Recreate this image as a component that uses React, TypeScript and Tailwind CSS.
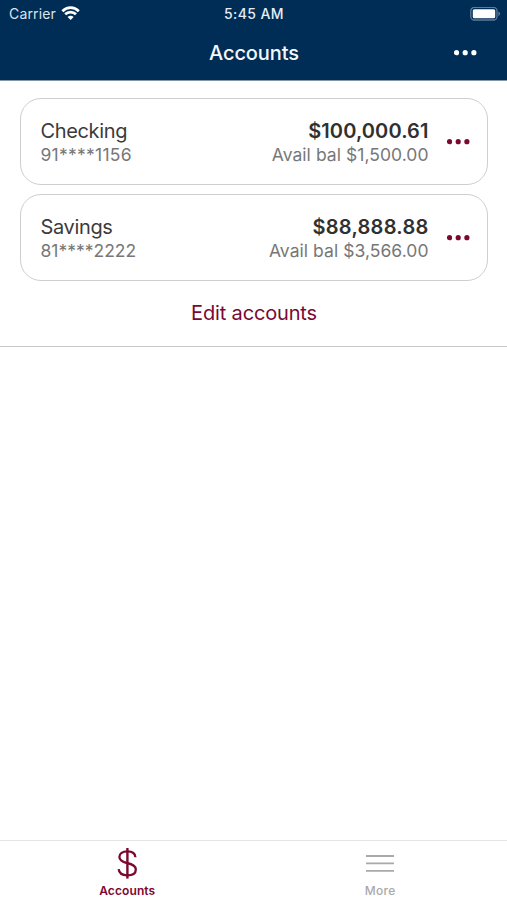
interface Account {
  name: string;
  mask: string;
  balance: string;
  available: string;
  // letter-spacing that differs between the rows
  maskTracking: string;
  balanceTracking: string;
}

const accounts: Account[] = [
  {
    name: "Checking",
    mask: "91****1156",
    balance: "$100,000.61",
    available: "$1,500.00",
    maskTracking: "tracking-[0.25px]",
    balanceTracking: "tracking-[0.1px]",
  },
  {
    name: "Savings",
    mask: "81****2222",
    balance: "$88,888.88",
    available: "$3,566.00",
    maskTracking: "tracking-[0px]",
    balanceTracking: "tracking-[0.25px]",
  },
];

function Dots() {
  return (
    <svg width="23" height="6" viewBox="0 0 23 6" fill="currentColor">
      <circle cx="2.5" cy="2.7" r="2.6" />
      <circle cx="11.2" cy="2.7" r="2.6" />
      <circle cx="19.9" cy="2.7" r="2.6" />
    </svg>
  );
}

function WifiIcon() {
  return (
    <svg width="20" height="15" viewBox="0 0 20 15" fill="none" stroke="white" strokeWidth="2.7">
      <path d="M1.4 5.3C6.1 .5 13.1 .5 17.8 5.3" />
      <path d="M4.2 8.3C7.1 5.4 12.1 5.4 15 8.3" />
      <path d="M9.6 14.1L6.6 11.1C8.3 9.4 10.9 9.4 12.6 11.1Z" fill="white" stroke="none" />
    </svg>
  );
}

function BatteryIcon() {
  return (
    <svg width="31" height="14" viewBox="0 0 31 14" fill="none">
      <rect x=".8" y=".4" width="26.2" height="12.6" rx="3.5" stroke="#5f7b98" strokeWidth="1.3" />
      <rect x="2.8" y="2.2" width="22.4" height="9" rx="1.5" fill="white" />
      <path d="M28.4 4.5C30.7 5.5 30.7 7.9 28.4 8.9Z" fill="#5f7b98" />
    </svg>
  );
}

function StatusBar() {
  return (
    <div className="grid h-[27px] grid-cols-3 items-center pl-[9px] pr-[6px]">
      <div className="flex items-center gap-[5px]">
        <span className="text-[14px] leading-[27px] tracking-[0.15px] text-[#dce4ec]">Carrier</span>
        <WifiIcon />
      </div>
      <span className="mr-[2px] pt-px text-center text-[14px] leading-[26px] font-medium tracking-[0.4px] text-[#e6edf4]">
        5:45 AM
      </span>
      <div className="flex justify-end">
        <BatteryIcon />
      </div>
    </div>
  );
}

function AccountCard({ account }: { account: Account }) {
  return (
    <div className="flex h-[87px] items-center rounded-[21px] border border-[#cfcfcf] bg-white pr-[17px] pl-[19.5px]">
      <div className="flex-1 pt-[2px]">
        <div className="text-[20px] leading-[24px] tracking-[-0.35px] text-[#3b3b3b]">{account.name}</div>
        <div className={`mt-px text-[17.5px] leading-[22px] text-[#777777] ${account.maskTracking}`}>{account.mask}</div>
      </div>
      <div className="pt-[2px] text-right">
        <div className={`text-[20px] leading-[24px] font-semibold text-[#303030] ${account.balanceTracking}`}>
          {account.balance}
        </div>
        <div className="mt-px text-[17.5px] leading-[22px] tracking-[0.05px] text-[#777777]">
          Avail bal {account.available}
        </div>
      </div>
      <button className="ml-[18.5px] text-[#7a0830]">
        <Dots />
      </button>
    </div>
  );
}

export default function App() {
  return (
    <div className="flex h-[900px] w-[507px] flex-col bg-white font-['Inter',sans-serif]">
      <header className="h-[80px] bg-[#002d56] text-[#f4f7fa]">
        <StatusBar />
        <div className="grid h-[52px] grid-cols-[1fr_auto_1fr] items-center">
          <h1 className="col-start-2 pl-px text-[20px] leading-[52px] font-[450] tracking-[-0.1px]">Accounts</h1>
          <button className="mr-[30px] justify-self-end text-white">
            <Dots />
          </button>
        </div>
      </header>

      <main className="flex-1 border-t border-[#8294a6]">
        <section className="flex h-[266px] flex-col gap-[9px] border-b border-[#c7c7c7] pt-[17px] pr-[19px] pl-[20px]">
          {accounts.map((account) => (
            <AccountCard key={account.mask} account={account} />
          ))}
          <button className="mt-[9px] text-[20px] leading-[28px] tracking-[-0.15px] text-[#7a0830]">Edit accounts</button>
        </section>
      </main>

      <nav className="grid h-[60px] grid-cols-2 border-t border-[#e5e5e5]">
        <button className="flex flex-col items-center pt-[6px] text-[#7a0830]">
          <svg width="22" height="33" viewBox="0 0 22 33" fill="none" stroke="currentColor" strokeWidth="2.3">
            <path d="M11.4 1V31.6" strokeWidth="2.4" />
            <path d="M19.4 10.2C19.2 6.5 16.4 4.4 11.4 4.4C6.5 4.4 3.4 6.7 3.4 10.1C3.4 13.4 5.8 14.9 11 16C16.9 17.3 19.8 18.8 19.8 22.4C19.8 26.2 16.6 28.3 11.4 28.3C6.2 28.3 3 26.2 2.7 22.2" />
          </svg>
          <span className="mt-[3px] pl-px text-[12px] leading-[16px] font-semibold tracking-[0.1px]">Accounts</span>
        </button>
        <button className="flex flex-col items-center pt-[6px] text-[#a9a9a9]">
          <svg width="30" height="33" viewBox="0 0 30 33" stroke="currentColor" strokeWidth="1.8">
            <path d="M1 9H29M1 16.4H29M1 23.8H29" />
          </svg>
          <span className="mt-[3px] text-[12px] leading-[16px] font-medium tracking-[0.3px]">More</span>
        </button>
      </nav>
    </div>
  );
}
